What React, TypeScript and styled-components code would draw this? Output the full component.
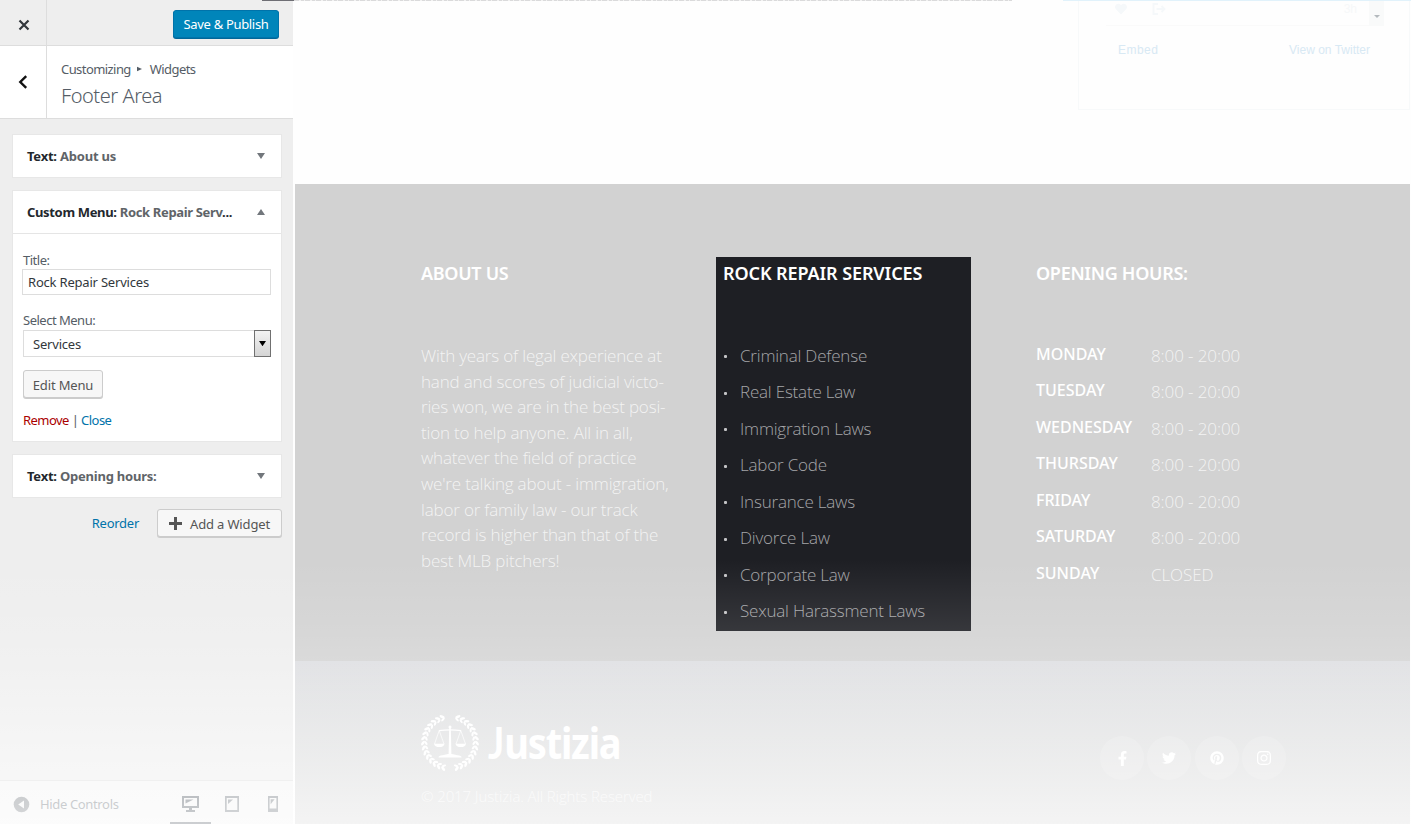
import React from "react";
import styled, { createGlobalStyle } from "styled-components";
import { FaFacebookF, FaTwitter, FaPinterest, FaInstagram, FaHeart } from "react-icons/fa";

const GlobalStyle = createGlobalStyle`
  * { box-sizing: border-box; }
  body { margin: 0; background: #fff; overflow: hidden; }
  ul { list-style: none; margin: 0; padding: 0; }
  h1, h2, h3, p { margin: 0; font-weight: inherit; }
  button, input { font: inherit; letter-spacing: inherit; }
`;

const Page = styled.div`
  position: relative;
  display: flex;
  width: 1411px;
  height: 824px;
  overflow: hidden;
  background: #fefefe;
`;

const Fade = styled.div`
  position: absolute;
  inset: 560px 0 0 0;
  pointer-events: none;
  background: linear-gradient(to bottom, rgba(255, 255, 255, 0) 0%, rgba(255, 255, 255, 0.11) 27%, rgba(255, 255, 255, 0.19) 40%, rgba(255, 255, 255, 0.7) 100%);
`;

/* ---------- Customizer sidebar ---------- */

const Sidebar = styled.aside`
  display: flex;
  flex-direction: column;
  flex: none;
  width: 293px;
  height: 824px;
  background: #eee;
  font: 13px/18px "Noto Sans", "Open Sans", sans-serif;
  letter-spacing: -0.5px;
  color: #555d66;
`;

const TopBar = styled.header`
  display: flex;
  justify-content: space-between;
  height: 46px;
  border-bottom: 1px solid #ddd;
`;

const SquareButton = styled.button<{ $light?: boolean }>`
  display: flex;
  align-items: center;
  justify-content: center;
  width: 47px;
  padding: ${(p) => (p.$light ? "0" : "4px 0 0 1px")};
  border: 0;
  border-right: 1px solid #ddd;
  background: ${(p) => (p.$light ? "#fff" : "#eee")};
`;

const SaveButton = styled.button`
  width: 106px;
  height: 28px;
  margin: 10px 14px 0 0;
  padding: 0 0 1px;
  border: 1px solid #0073aa;
  border-radius: 3px;
  background: #0085ba;
  color: #fff;
  letter-spacing: -0.32px;
  box-shadow: 0 1px 0 #006799;
`;

const PanelHead = styled.div`
  display: flex;
  height: 73px;
  border-bottom: 1px solid #ddd;
  background: #fff;
`;

const PanelTitle = styled.div`
  padding: 14px 0 0 14px;
`;

const Crumb = styled.div`
  display: flex;
  align-items: center;
  gap: 6.5px;
  height: 18px;
  letter-spacing: -0.57px;
`;

const PanelName = styled.h1`
  margin-top: 5px;
  font-size: 20px;
  line-height: 26px;
  letter-spacing: -0.45px;
  font-weight: 350;
`;

const Widgets = styled.div`
  display: flex;
  flex-direction: column;
  gap: 12px;
  padding: 15px 11px 0 12px;
`;

const Widget = styled.section`
  border: 1px solid #e7e7e7;
  background: #fff;
`;

const WidgetHead = styled.div<{ $open?: boolean }>`
  display: flex;
  align-items: center;
  justify-content: space-between;
  height: ${(p) => (p.$open ? 43 : 42)}px;
  padding: 0 16px 0 14px;
  border-bottom: ${(p) => (p.$open ? "1px solid #e5e5e5" : "0")};
  font-weight: 700;
  letter-spacing: ${(p) => (p.$open ? -0.34 : -0.22)}px;
  color: #23282d;
`;

const Muted = styled.span`
  color: #606468;
`;

const WidgetBody = styled.div`
  display: flex;
  flex-direction: column;
  height: 207px;
  padding: 17px 9px 0 10px;
`;

const TextInput = styled.input`
  width: 249px;
  height: 26px;
  margin-left: -1px;
  padding: 0 5px;
  border: 1px solid #ddd;
  border-radius: 0;
  color: #32373c;
  letter-spacing: -0.2px;
`;

const Label = styled.label`
  height: 18px;
`;

const SelectLabel = styled(Label)`
  margin-top: 16px;
`;

const Select = styled.div`
  display: flex;
  align-items: stretch;
  justify-content: space-between;
  width: 248px;
  height: 27px;
  margin-top: 1px;
  border: 1px solid #ddd;
  color: #32373c;
  letter-spacing: -0.2px;
  span { padding: 4px 0 0 9px; }
`;

const SelectArrow = styled.div`
  display: flex;
  align-items: center;
  justify-content: center;
  width: 17px;
  margin: -1px;
  border: 1px solid #707070;
  background: linear-gradient(#f3f3f3, #d4d4d4);
`;

const GrayButton = styled.button<{ $w: number }>`
  display: flex;
  align-items: center;
  justify-content: center;
  gap: 8px;
  width: ${(p) => p.$w}px;
  height: 28px;
  padding: 1px 0 0;
  border: 1px solid #ccc;
  border-radius: 3px;
  background: #f7f7f7;
  color: #555;
  letter-spacing: -0.15px;
  box-shadow: 0 1px 0 #ccc;
`;

const EditRow = styled.div`
  padding-top: 13px;
  letter-spacing: -0.2px;
`;

const Links = styled.div`
  padding-top: 13px;
  letter-spacing: -0.55px;
`;

const Link = styled.a<{ $danger?: boolean }>`
  color: ${(p) => (p.$danger ? "#a00" : "#0073aa")};
`;

const Actions = styled.div`
  display: flex;
  align-items: center;
  justify-content: flex-end;
  gap: 18px;
  margin-top: -1px;
  letter-spacing: -0.27px;
`;

const SidebarFoot = styled.footer`
  display: flex;
  align-items: center;
  height: 44px;
  margin-top: auto;
  padding: 3px 0 0 13px;
  border-top: 1px solid #ddd;
  background: #f4f4f4;
  color: #555d66;
`;

const HideLabel = styled.span`
  margin-left: 10px;
  letter-spacing: -0.35px;
  opacity: 0.85;
`;

const Devices = styled.div`
  display: flex;
  align-items: center;
  margin-left: auto;
  height: 100%;
`;

const Device = styled.span<{ $active?: boolean; $w: number }>`
  display: flex;
  align-items: center;
  justify-content: center;
  width: ${(p) => p.$w}px;
  height: 41px;
  padding-top: 2px;
  border-bottom: 3px solid ${(p) => (p.$active ? "#555d66" : "transparent")};
  opacity: ${(p) => (p.$active ? 1 : 0.8)};
`;

/* ---------- Site preview ---------- */

const Preview = styled.main`
  display: flex;
  flex-direction: column;
  width: 1118px;
  padding: 0 1px 0 2px;
  font-family: "Open Sans", sans-serif;
  color: #fff;
`;

const PreviewTop = styled.div`
  display: flex;
  justify-content: flex-end;
  height: 184px;
  background: #fefefe;
`;

const TweetCard = styled.div`
  width: 332px;
  height: 110px;
  border: 1px solid #f7f9fa;
  border-top: 0;
  padding: 0 8px 0 27px;
  font: 12px/16px "Liberation Sans", Arial, sans-serif;
`;

const TweetActions = styled.div`
  display: flex;
  align-items: center;
  gap: 25px;
  height: 26px;
  margin-right: 17px;
  padding: 0 0 7px 9px;
  border-bottom: 1px solid #fafafa;
  color: #f5f8fa;
`;

const TweetTime = styled.span`
  margin: 0 12px 0 auto;
  color: #f6f8f9;
`;

const ScrollArrow = styled.span`
  display: flex;
  align-items: center;
  justify-content: center;
  width: 15px;
  height: 26px;
  margin: 0 0 -7px -25px;
  padding-top: 8px;
  background: #f9fafa;
`;

const TweetLinks = styled.div`
  display: flex;
  justify-content: space-between;
  padding: 16px 31px 0 12px;
  color: #d8e9f4;
`;

const EmbedLink = styled.span`
  letter-spacing: 0.45px;
`;

const Columns = styled.section`
  display: flex;
  height: 477px;
  padding: 73px 0 0 126px;
  background: #d2d2d2;
`;

const Column = styled.div<{ $w: number; $dark?: boolean; $pad?: number }>`
  width: ${(p) => p.$w}px;
  height: 374px;
  padding-left: ${(p) => p.$pad ?? 0}px;
  background: ${(p) => (p.$dark ? "#1e1f24" : "transparent")};
`;

const ColumnTitle = styled.h2<{ $track?: number }>`
  height: 86px;
  padding-top: 4px;
  font: 560 18px/24px "Noto Sans", "Open Sans", sans-serif;
  letter-spacing: ${(p) => p.$track ?? -0.3}px;
  white-space: nowrap;
`;

const About = styled.p`
  font-size: 17px;
  line-height: 25.6px;
  font-weight: 300;
  letter-spacing: -0.18px;
  color: rgba(255, 255, 255, 0.75);
  white-space: pre;
`;

const Menu = styled.ul`
  margin-top: -1px;
`;

const MenuItem = styled.li`
  display: flex;
  align-items: center;
  gap: 13px;
  height: 36.5px;
  padding-bottom: 10px;
  font-size: 17px;
  font-weight: 300;
  letter-spacing: -0.2px;
  color: #a5a5a8;
  white-space: nowrap;
  &::before {
    content: "";
    width: 3px;
    height: 3px;
    margin: 3px 0 0 1px;
    border-radius: 1px;
    background: #c4c4c6;
  }
`;

const DayRow = styled.li`
  display: flex;
  height: 36.45px;
  line-height: 24px;
`;

const Day = styled.span`
  width: 115px;
  font: 500 16px/22px "Noto Sans", "Open Sans", sans-serif;
  letter-spacing: 0;
`;

const Hours = styled.span`
  padding-top: 1px;
  font-size: 17px;
  font-weight: 300;
  letter-spacing: -0.1px;
  color: rgba(255, 255, 255, 0.75);
`;

const SiteFoot = styled.footer`
  display: flex;
  justify-content: space-between;
  height: 163px;
  padding: 52px 124px 0 125px;
  background: linear-gradient(#dcdde0, #dbdcdd 45%, #d9d9d9);
`;

const Brand = styled.div`
  display: flex;
  align-items: center;
  gap: 8px;
  height: 60px;
`;

const BrandName = styled.span`
  font: 700 43px/60px "Noto Sans", "Open Sans", sans-serif;
  letter-spacing: -1.4px;
  margin-top: -1px;
  transform: scaleX(0.885);
  transform-origin: left;
`;

const BrandInitial = styled.span`
  font-family: Lato, sans-serif;
  letter-spacing: 0;
`;

const Copyright = styled.p`
  margin-top: 11px;
  padding-left: 1px;
  font-size: 15px;
  line-height: 24px;
  font-weight: 300;
  letter-spacing: -0.1px;
  color: rgba(255, 255, 255, 0.7);
`;

const Socials = styled.div`
  display: flex;
  gap: 3.3px;
  padding-top: 23px;
`;

const Social = styled.span`
  display: flex;
  align-items: center;
  justify-content: center;
  width: 44px;
  height: 44px;
  border-radius: 50%;
  background: rgba(255, 255, 255, 0.16);
`;

const TopStrip = styled.div`
  position: absolute;
  top: 0;
  left: 262px;
  display: flex;
  width: 1149px;
  height: 1px;
`;

const Strip = styled.i<{ $w: number; $bg: string }>`
  width: ${(p) => p.$w}px;
  background: ${(p) => p.$bg};
`;

const Triangle = ({ up, size = 8, color = "#72777c" }: { up?: boolean; size?: number; color?: string }) => (
  <svg width={size} height={size * 0.75} viewBox="0 0 8 6">
    <path d={up ? "M0 6L4 0L8 6Z" : "M0 0H8L4 6Z"} fill={color} />
  </svg>
);

const LEAVES = Array.from({ length: 15 }, (_, i) => 17 + i * 10.6);

const Emblem = () => (
  <svg width="60" height="60" viewBox="-30 -29.5 60 60" fill="#fff">
    {[1, -1].map((side) => (
      <g key={side} transform={`scale(${side} 1)`}>
        {LEAVES.map((a) => (
          <g key={a} transform={`rotate(${a})`}>
            <ellipse cx="0" cy="-27" rx="2.7" ry="1.3" transform="rotate(-38 0 -27)" />
            <ellipse cx="0" cy="-24" rx="2.3" ry="1.1" transform="rotate(30 0 -24)" />
          </g>
        ))}
      </g>
    ))}
    <path d="M-.8-15.5h1.6l.6 27.5h-2.8z" />
    <circle cx="0" cy="-15.6" r="1.5" />
    <path d="M-11-12.4Q0-14 11-12.4v1.2Q0-12.6-11-11.2z" />
    <path d="M-11.5 15q0-2 4-2.2l5.5-1.3h4l5.5 1.3q4 .2 4 2.2z" />
    <path d="M-15.5 1.5L-10.8-12L-6 1.5M6 1.5L10.8-12L15.5 1.5" fill="none" stroke="#fff" strokeWidth=".7" />
    <path d="M-16 1.2h10.5q-.6 3.4-5.2 3.4T-16 1.2zM5.5 1.2H16q-.6 3.4-5.2 3.4T5.5 1.2z" />
  </svg>
);

const MENU = ["Criminal Defense", "Real Estate Law", "Immigration Laws", "Labor Code", "Insurance Laws", "Divorce Law", "Corporate Law", "Sexual Harassment Laws"];
const DAYS = ["MONDAY", "TUESDAY", "WEDNESDAY", "THURSDAY", "FRIDAY", "SATURDAY", "SUNDAY"];
const ABOUT = `With years of legal experience at
hand and scores of judicial victo-
ries won, we are in the best posi-
tion to help anyone. All in all,
whatever the field of practice
we're talking about - immigration,
labor or family law - our track
record is higher than that of the
best MLB pitchers!`;

export default function App() {
  return (
    <Page>
      <GlobalStyle />
      <Sidebar>
        <TopBar>
          <SquareButton aria-label="Close">
            <svg width="12" height="12" viewBox="0 0 12 12" stroke="#32373c" strokeWidth="2.2">
              <path d="M1.5 1.5l9 9M10.5 1.5l-9 9" />
            </svg>
          </SquareButton>
          <SaveButton>Save &amp; Publish</SaveButton>
        </TopBar>
        <PanelHead>
          <SquareButton $light aria-label="Back">
            <svg width="10" height="14" viewBox="0 0 10 14" fill="none" stroke="#111" strokeWidth="2.4">
              <path d="M8.2 1.2L2.3 7l5.9 5.8" />
            </svg>
          </SquareButton>
          <PanelTitle>
            <Crumb>
              <span>Customizing</span>
              <svg width="6" height="6" viewBox="0 0 6 6"><path d="M0 .8L5 3L0 5.2Z" fill="#555d66" /></svg>
              <span>Widgets</span>
            </Crumb>
            <PanelName>Footer Area</PanelName>
          </PanelTitle>
        </PanelHead>
        <Widgets>
          <Widget>
            <WidgetHead>
              <span>Text: <Muted>About us</Muted></span>
              <Triangle />
            </WidgetHead>
          </Widget>
          <Widget>
            <WidgetHead $open>
              <span>Custom Menu: <Muted>Rock Repair Serv</Muted>...</span>
              <Triangle up />
            </WidgetHead>
            <WidgetBody>
              <Label>Title:</Label>
              <TextInput defaultValue="Rock Repair Services" />
              <SelectLabel>Select Menu:</SelectLabel>
              <Select>
                <span>Services</span>
                <SelectArrow><Triangle size={7} color="#000" /></SelectArrow>
              </Select>
              <EditRow><GrayButton $w={80}>Edit Menu</GrayButton></EditRow>
              <Links><Link $danger>Remove</Link> | <Link>Close</Link></Links>
            </WidgetBody>
          </Widget>
          <Widget>
            <WidgetHead>
              <span>Text: <Muted>Opening hours:</Muted></span>
              <Triangle />
            </WidgetHead>
          </Widget>
          <Actions>
            <Link>Reorder</Link>
            <GrayButton $w={125}>
              <svg width="13" height="13" viewBox="0 0 13 13" stroke="#555" strokeWidth="3"><path d="M6.5 0v13M0 6.5h13" /></svg>
              <span>Add a Widget</span>
            </GrayButton>
          </Actions>
        </Widgets>
        <SidebarFoot>
          <svg width="17" height="17" viewBox="0 0 17 17" opacity=".85">
            <circle cx="8.5" cy="8.5" r="7.8" fill="#666c72" />
            <path d="M11 4.5v8L5.2 8.5Z" fill="#f4f4f4" />
          </svg>
          <HideLabel>Hide Controls</HideLabel>
          <Devices>
            <Device $w={41} $active>
              <svg width="17" height="16" viewBox="0 0 17 16" fill="#555d66">
                <path fillRule="evenodd" d="M0 0h17v12H0zM2 2v8h13V2z" />
                <path d="M3.5 3.5h8l-8 4zM7 12h3v2h3v2H4v-2h3z" />
              </svg>
            </Device>
            <Device $w={41}>
              <svg width="14" height="16" viewBox="0 0 14 16" fill="#555d66">
                <path fillRule="evenodd" d="M0 0h14v16H0zM1.7 2v12h10.6V2z" />
                <path d="M3 3.5h5l-5 4.5z" />
              </svg>
            </Device>
            <Device $w={41}>
              <svg width="10" height="16" viewBox="0 0 10 16" fill="#555d66">
                <path fillRule="evenodd" d="M0 0h10v16H0zM1.6 2v10.5h6.8V2z" />
                <path d="M2.6 3.2h4l-4 5z" />
              </svg>
            </Device>
          </Devices>
        </SidebarFoot>
      </Sidebar>
      <Preview>
        <PreviewTop>
          <TweetCard>
            <TweetActions>
              <FaHeart size={12} />
              <svg width="14" height="12" viewBox="0 0 14 12" fill="none" stroke="currentColor" strokeWidth="1.8">
                <path d="M6 1H1.5v10H6M4.5 6H12M9.5 3L12.5 6L9.5 9" />
              </svg>
              <TweetTime>3h</TweetTime>
              <ScrollArrow>
                <svg width="6" height="3" viewBox="0 0 6 3"><path d="M0 0H6L3 3Z" fill="#b4b9bd" /></svg>
              </ScrollArrow>
            </TweetActions>
            <TweetLinks><EmbedLink>Embed</EmbedLink><span>View on Twitter</span></TweetLinks>
          </TweetCard>
        </PreviewTop>
        <Columns>
          <Column $w={295}>
            <ColumnTitle>ABOUT US</ColumnTitle>
            <About>{ABOUT}</About>
          </Column>
          <Column $w={255} $dark $pad={7}>
            <ColumnTitle $track={-0.1}>ROCK REPAIR SERVICES</ColumnTitle>
            <Menu>{MENU.map((m) => <MenuItem key={m}>{m}</MenuItem>)}</Menu>
          </Column>
          <Column $w={370} $pad={65}>
            <ColumnTitle>OPENING HOURS:</ColumnTitle>
            <ul>
              {DAYS.map((d) => (
                <DayRow key={d}>
                  <Day>{d}</Day>
                  <Hours>{d === "SUNDAY" ? "CLOSED" : "8:00 - 20:00"}</Hours>
                </DayRow>
              ))}
            </ul>
          </Column>
        </Columns>
        <SiteFoot>
          <div>
            <Brand>
              <Emblem />
              <BrandName><BrandInitial>J</BrandInitial>ustizia</BrandName>
            </Brand>
            <Copyright>© 2017 Justizia. All Rights Reserved</Copyright>
          </div>
          <Socials>
            <Social><FaFacebookF size={15} /></Social>
            <Social><FaTwitter size={14} /></Social>
            <Social><FaPinterest size={14} /></Social>
            <Social><FaInstagram size={16} /></Social>
          </Socials>
        </SiteFoot>
      </Preview>
      <TopStrip>
        <Strip $w={32} $bg="#6e6e74" />
        <Strip $w={718} $bg="repeating-linear-gradient(90deg, #dadadb 0 5px, #f2f2f2 5px 7px, #dadadb 7px 10px, #f2f2f2 10px 11px)" />
        <Strip $w={51} $bg="#fefefe" />
        <Strip $w={348} $bg="#e1f2fb" />
      </TopStrip>
      <Fade />
    </Page>
  );
}
